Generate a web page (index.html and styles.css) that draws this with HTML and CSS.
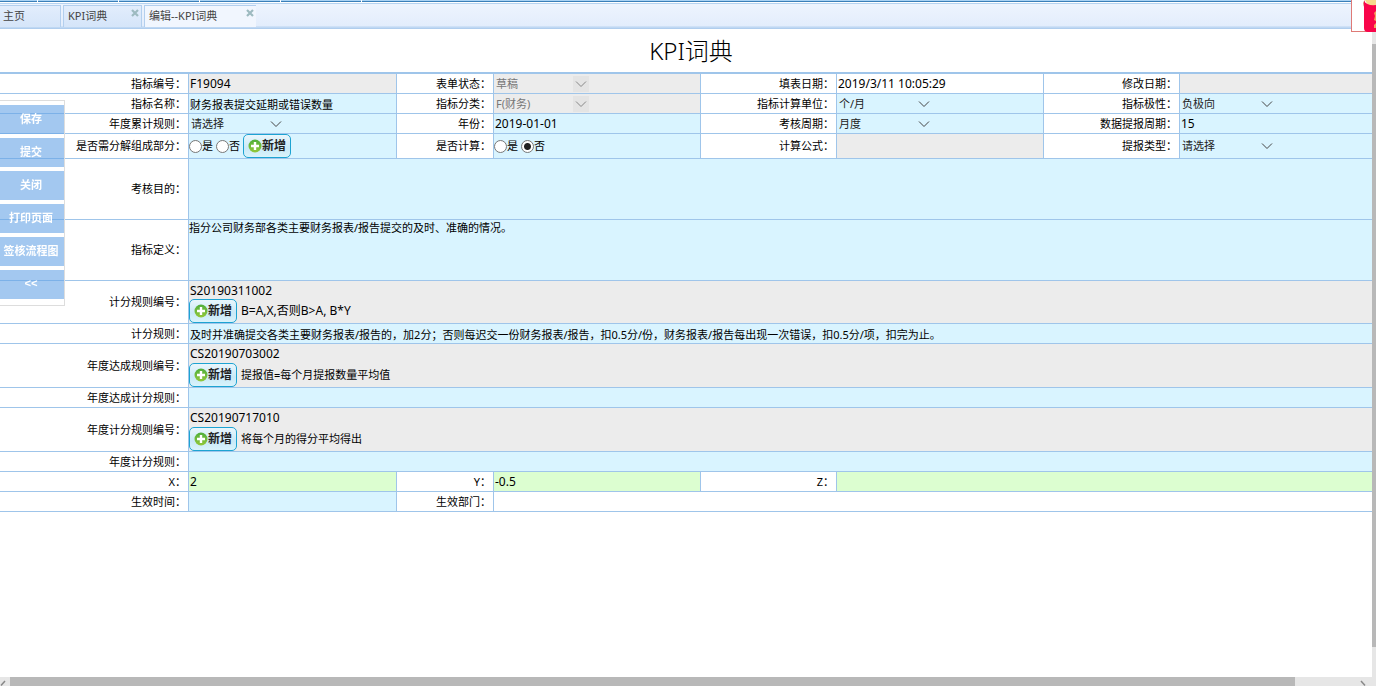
FILE: index.html
```html
<!DOCTYPE html>
<html lang="zh-CN">
<head>
  <meta charset="UTF-8" />
  <meta name="viewport" content="width=device-width, initial-scale=1" />
  <title>编辑--KPI词典</title>
  <link rel="stylesheet" href="styles.css">
</head>
<body>
  <svg width="0" height="0" class="sprite" aria-hidden="true">
    <defs>
      <linearGradient id="green" x1="0" y1="0" x2="0" y2="1">
        <stop offset="0" stop-color="#4fae3c" />
        <stop offset="1" stop-color="#93c83a" />
      </linearGradient>
    </defs>
    <symbol id="plus" viewBox="0 0 14 14">
      <circle cx="7" cy="7" r="6.5" fill="url(#green)" />
      <path d="M7 3v8M3 7h8" stroke="#fff" stroke-width="2.4" />
    </symbol>
    <symbol id="close" viewBox="0 0 8 8">
      <path d="M1 1l6 6M7 1l-6 6" stroke="#9dbac0" stroke-width="2.2" />
    </symbol>
  </svg>

  <div class="menu-strip"><i class="first"></i><i></i><i></i><i></i><i></i></div>

  <nav class="tabs">
    <div class="tab home"><a href="#">主页</a></div>
    <div class="tab kpi">
      <a href="#">KPI词典</a>
      <button class="tab-close" aria-label="关闭"><svg width="8" height="8"><use href="#close" /></svg></button>
    </div>
    <div class="tab edit active">
      <a href="#">编辑--KPI词典</a>
      <button class="tab-close" aria-label="关闭"><svg width="8" height="8"><use href="#close" /></svg></button>
    </div>
  </nav>

  <div class="gift">
    <svg width="24" height="32" viewBox="0 0 24 32">
      <path d="M13 0q-4 3 0 8z" fill="#d98a7c" />
      <path d="M13 0h11v7q-7 2-11-7z" fill="#f6d98c" />
      <path d="M12 1q3 5 12 4v27h-8q-4 0-4-4z" fill="#f9054a" />
      <path d="M24 11l-2 2 1 3-1 4 2 1z" fill="#f3a45c" />
      <path d="M24 23l-2 2v3h2z" fill="#f3a45c" />
    </svg>
  </div>

  <div class="work">
    <form class="sheet" onsubmit="return false">
      <h1>KPI词典</h1>
      <div class="grid">
        <!-- 基本信息 -->
        <label class="name" for="code">指标编号：</label>
        <div class="cell gray"><input id="code" value="F19094" readonly></div>
        <label class="name" for="state">表单状态：</label>
        <div class="cell gray"><select id="state" disabled><option>草稿</option></select></div>
        <label class="name" for="fillDate">填表日期：</label>
        <div class="cell"><input id="fillDate" value="2019/3/11 10:05:29" readonly></div>
        <label class="name" for="editDate">修改日期：</label>
        <div class="cell gray last"><input id="editDate" readonly></div>

        <label class="name" for="title">指标名称：</label>
        <div class="cell blue text"><input id="title" value="财务报表提交延期或错误数量"></div>
        <label class="name" for="kind">指标分类：</label>
        <div class="cell gray"><select id="kind" disabled><option>F(财务)</option></select></div>
        <label class="name" for="unit">指标计算单位：</label>
        <div class="cell blue"><select id="unit"><option>个/月</option></select></div>
        <label class="name" for="polar">指标极性：</label>
        <div class="cell blue last"><select id="polar"><option>负极向</option></select></div>

        <label class="name" for="yearRule">年度累计规则：</label>
        <div class="cell blue"><select id="yearRule"><option>请选择</option></select></div>
        <label class="name" for="year">年份：</label>
        <div class="cell blue"><input id="year" value="2019-01-01"></div>
        <label class="name" for="period">考核周期：</label>
        <div class="cell blue"><select id="period"><option>月度</option></select></div>
        <label class="name" for="cycle">数据提报周期：</label>
        <div class="cell blue last"><input id="cycle" value="15"></div>

        <span class="name">是否需分解组成部分：</span>
        <div class="cell blue text radios">
          <label><input type="radio" name="split">是</label>
          <label><input type="radio" name="split">否</label>
          <button class="add"><svg width="14" height="14"><use href="#plus" /></svg>新增</button>
        </div>
        <span class="name">是否计算：</span>
        <div class="cell blue text radios">
          <label><input type="radio" name="calc">是</label>
          <label><input type="radio" name="calc" checked>否</label>
        </div>
        <label class="name" for="formula">计算公式：</label>
        <div class="cell gray"><input id="formula" readonly></div>
        <label class="name" for="reportType">提报类型：</label>
        <div class="cell blue last"><select id="reportType"><option>请选择</option></select></div>

        <!-- 说明 -->
        <label class="name" for="aim">考核目的：</label>
        <div class="cell blue text wide"><textarea id="aim"></textarea></div>

        <label class="name" for="define">指标定义：</label>
        <div class="cell blue text wide"><textarea id="define">指分公司财务部各类主要财务报表/报告提交的及时、准确的情况。</textarea></div>

        <!-- 规则 -->
        <label class="name" for="rule1">计分规则编号：</label>
        <div class="cell gray wide stack">
          <input id="rule1" value="S20190311002" readonly>
          <div class="line"><button class="add"><svg width="14" height="14"><use href="#plus" /></svg>新增</button><span>B=A,X,否则B&gt;A, B*Y</span></div>
        </div>

        <label class="name" for="score">计分规则：</label>
        <div class="cell blue text wide"><input id="score" value="及时并准确提交各类主要财务报表/报告的，加2分；否则每迟交一份财务报表/报告，扣0.5分/份，财务报表/报告每出现一次错误，扣0.5分/项，扣完为止。"></div>

        <label class="name" for="rule2">年度达成规则编号：</label>
        <div class="cell gray wide stack yearly">
          <input id="rule2" value="CS20190703002" readonly>
          <div class="line"><button class="add"><svg width="14" height="14"><use href="#plus" /></svg>新增</button><span>提报值=每个月提报数量平均值</span></div>
        </div>

        <label class="name" for="reach">年度达成计分规则：</label>
        <div class="cell blue wide"><input id="reach"></div>

        <label class="name" for="rule3">年度计分规则编号：</label>
        <div class="cell gray wide stack yearly">
          <input id="rule3" value="CS20190717010" readonly>
          <div class="line"><button class="add"><svg width="14" height="14"><use href="#plus" /></svg>新增</button><span>将每个月的得分平均得出</span></div>
        </div>

        <label class="name" for="yearScore">年度计分规则：</label>
        <div class="cell blue wide"><input id="yearScore"></div>

        <label class="name" for="x">X：</label>
        <div class="cell green"><input id="x" value="2"></div>
        <label class="name" for="y">Y：</label>
        <div class="cell green"><input id="y" value="-0.5"></div>
        <label class="name" for="z">Z：</label>
        <div class="cell green rest3"><input id="z"></div>

        <label class="name" for="valid">生效时间：</label>
        <div class="cell blue"><input id="valid"></div>
        <label class="name" for="dept">生效部门：</label>
        <div class="cell rest5"><input id="dept"></div>
      </div>
    </form>
    <div class="vbar"><div class="thumb"></div></div>
  </div>

  <div class="hbar">
    <svg width="10" height="9" viewBox="0 0 10 9"><path d="M5 4L1 8.500" /></svg>
    <div class="thumb"></div>
    <svg class="right" width="10" height="9" viewBox="0 0 10 9"><path d="M1 4l4 4.500" /></svg>
  </div>

  <div class="side">
    <button>保存</button>
    <button>提交</button>
    <button>关闭</button>
    <button>打印页面</button>
    <button>签核流程图</button>
    <button class="fold">&lt;&lt;</button>
  </div>
</body>
</html>
```
FILE: styles.css
```css
* {
  box-sizing: border-box;
}
body {
  margin: 0;
  height: 100vh;
  display: flex;
  flex-direction: column;
  overflow: hidden;
  background: #fff;
  color: #000;
  font-family: "Noto Sans", "Noto Sans CJK SC", sans-serif;
  font-size: 12px;
  line-height: 16px;
}
button, input, select, textarea {
  margin: 0;
  font: inherit;
  color: inherit;
}
.sprite {
  position: absolute;
}

/* top */
.menu-strip {
  flex: none;
  display: flex;
  height: 3px;
  background: linear-gradient(#a9d3f4 1px, #3b7fb8 1px, #3b7fb8 2px, #fff 2px);
}
.menu-strip i {
  width: 81px;
  border-right: 1px solid #fff;
}
.menu-strip .first {
  width: 38px;
}
.tabs {
  flex: none;
  display: flex;
  gap: 2px;
  height: 26px;
  padding-top: 1px;
  border-top: 1px solid #b5d3f1;
  background: linear-gradient(#edf4fe, #e3edfc 22px, #b9d4f1 23px, #c5dbf4 24px, #9bc0e8 25px);
}
.tab {
  position: relative;
  height: 22px;
  padding: 2px 4px;
  border: 1px solid #b3cfee;
  border-width: 1px 1px 0;
  background: linear-gradient(#e2edfc, #d5e5f9);
  font-size: 11px;
}
.tab a {
  color: #444;
  text-decoration: none;
}
.home {
  width: 61px;
  padding-left: 3px;
  border-left: 0;
}
.kpi {
  width: 79px;
}
.edit {
  width: 112px;
}
.tab.active {
  background: #f1f6fe;
  border-right: 0;
}
.tab-close {
  position: absolute;
  top: 3px;
  right: 2px;
  width: 8px;
  height: 8px;
  padding: 0;
  border: 0;
  background: none;
}
.tab-close svg {
  display: block;
}
.gift {
  position: absolute;
  top: 0;
  right: 0;
  width: 25px;
  height: 32px;
  border: 1px solid #df7a76;
  border-width: 0 0 1px 1px;
  background: #fff;
}
.gift svg {
  display: block;
}

/* form */
.work {
  flex: 1;
  min-height: 0;
  display: flex;
}
.sheet {
  flex: 1;
  min-width: 0;
  overflow: hidden;
}
h1 {
  margin: 0;
  padding: 6px 0 5px 10px;
  text-align: center;
  font-size: 24px;
  font-weight: 300;
  line-height: 32px;
}
.grid {
  display: grid;
  grid-template-columns: 189fr 208fr 97fr 207fr 136fr 207fr 136fr 192fr;
  border-top: 2px solid #9fc5ea;
}
.name,
.cell {
  min-width: 0;
  min-height: 20px;
  border-right: 1px solid #9fc5ea;
  border-bottom: 1px solid #9fc5ea;
}
.name {
  display: flex;
  align-items: center;
  justify-content: flex-end;
  padding-right: 2px;
  font-size: 11px;
  white-space: nowrap;
}
.cell {
  display: flex;
  align-items: center;
}
.last {
  border-right: 0;
}
.text {
  font-size: 11px;
}
.gray {
  background: #ececec;
}
.blue {
  background: #d9f4ff;
}
.green {
  background: #dcfed0;
}
.wide {
  grid-column: span 7;
  border-right: 0;
}
.rest3 {
  grid-column: span 3;
  border-right: 0;
}
.rest5 {
  grid-column: span 5;
  border-right: 0;
}
.cell > input {
  width: 100%;
  height: 19px;
  padding: 0 1px;
  border: 0;
  outline: 0;
  background: none;
}
textarea {
  display: block;
  width: 100%;
  height: 60px;
  padding: 0;
  border: 0;
  outline: 0;
  resize: none;
  background: none;
}
select {
  appearance: none;
  width: 95px;
  height: 18px;
  padding: 0 18px 0 2px;
  border: 0;
  border-radius: 0;
  background: url("data:image/svg+xml,%3Csvg xmlns='http://www.w3.org/2000/svg' width='16' height='16'%3E%3Cpath d='M3 5.500l5 5 5-5' fill='none' stroke='%23444'/%3E%3C/svg%3E") no-repeat right center;
  color: #222;
  font-size: 11px;
}
select:disabled {
  background-image: url("data:image/svg+xml,%3Csvg xmlns='http://www.w3.org/2000/svg' width='16' height='16'%3E%3Cpath d='M0 0h16v16H0z' fill='%23e4e4e4'/%3E%3Cpath d='M3 5.500l5 5 5-5' fill='none' stroke='%23888'/%3E%3C/svg%3E");
  color: #777;
  opacity: 1;
}
.radios {
  gap: 3px;
}
.radios label {
  display: flex;
  align-items: center;
}
.radios input {
  appearance: none;
  width: 13px;
  height: 13px;
  border: 1px solid #777;
  border-radius: 50%;
  background: #fff;
}
.radios input:checked {
  background: radial-gradient(circle, #222 3px, #fff 4px);
}
.add {
  display: flex;
  align-items: center;
  justify-content: center;
  width: 48px;
  height: 24px;
  padding: 0;
  border: 1px solid #1da3d2;
  border-radius: 5px;
  background: linear-gradient(#e9f6fc, #c9e9f7 60%, #d9f3fb);
  color: #222;
  font-size: 12px;
  font-weight: bold;
}
.stack {
  flex-direction: column;
  align-items: stretch;
}
.stack input {
  height: 18px;
}
.yearly input {
  height: 19px;
}
.line {
  display: flex;
  align-items: center;
  gap: 4px;
}
.yearly .line {
  font-size: 11px;
}

/* scrollbars */
.vbar {
  width: 4px;
  padding: 15px 0 30px;
  background: #e6e6e6;
}
.vbar .thumb {
  height: 100%;
  background: #b8b8b8;
}
.hbar {
  flex: none;
  display: flex;
  height: 9px;
  background: #e6e6e6;
}
.hbar .thumb {
  width: 1285px;
  background: #b8b8b8;
}
.hbar path {
  fill: none;
  stroke: #888;
  stroke-width: 1.5;
}
.hbar .right {
  margin-left: auto;
  margin-right: 6px;
}

/* floating buttons */
.side {
  position: fixed;
  top: 100px;
  left: 0;
  width: 65px;
  display: flex;
  flex-direction: column;
  gap: 4px;
  padding: 4px 0 6px;
  border: 1px solid #ddd;
  border-left: 0;
}
.side button {
  height: 29px;
  padding: 0 2px 1px 0;
  border: 0;
  background: rgba(102, 163, 230, .6);
  color: #fff;
  font-size: 11px;
  font-weight: bold;
}
.side .fold {
  font-family: "Liberation Mono", monospace;
}
```
